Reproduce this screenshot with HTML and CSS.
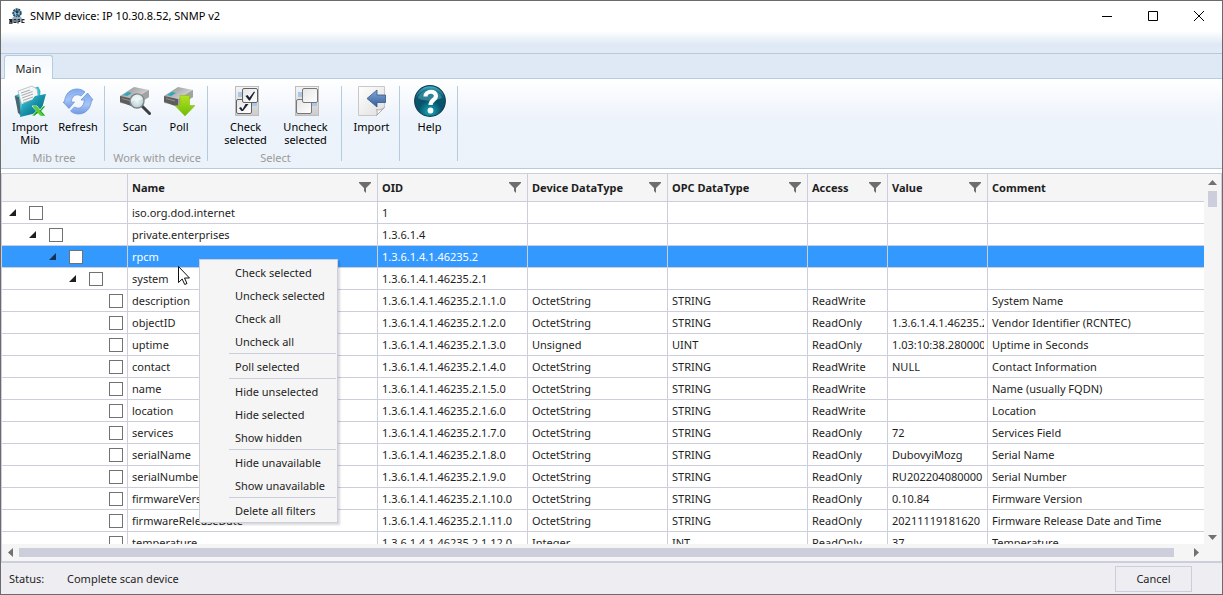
FILE: index.html
```html
<!DOCTYPE html>
<html lang="en">
<head>
<meta charset="utf-8">
<title>SNMP device: IP 10.30.8.52, SNMP v2</title>
<link rel="stylesheet" href="styles.css">
</head>
<body>
<div class="window">
  <header class="titlebar">
    <svg class="app-icon" viewBox="0 0 16 16" aria-hidden="true">
      <circle cx="8" cy="5" r="3.7" fill="#9fc3da" stroke="#234c68" stroke-width="2" stroke-dasharray="2 .6"/>
      <path d="M6 3.5 8 2l2 2-2 2zM7 6l3 .5L8 8z" fill="#17384f"/>
      <path d="M4 9h8l1 2H3z" fill="#8fb0c4"/>
      <path d="M0 11.500h3v1.200H1v1h2v1.500H0M5 11.500H7v3H5zM9 15.500V11.500h1.800v2H9M15.500 11.700H13v2.800h2.500" fill="none" stroke="#1d2730" stroke-width="1.200"/>
    </svg>
    <h1 class="title">SNMP device: IP 10.30.8.52, SNMP v2</h1>
    <div class="caption-buttons">
      <button type="button" aria-label="Minimize"><svg viewBox="0 0 10 10"><path d="M0 5.500h10"/></svg></button>
      <button type="button" aria-label="Maximize"><svg viewBox="0 0 10 10"><path d="M.5.5h9v9h-9z"/></svg></button>
      <button type="button" aria-label="Close"><svg viewBox="0 0 10 10"><path d="M0 0l10 10M10 0 0 10"/></svg></button>
    </div>
  </header>
  <div class="quickbar"></div>
  <nav class="tabs" role="tablist">
    <button type="button" class="tab" role="tab" aria-selected="true">Main</button>
  </nav>
  <div class="ribbon">
    <section class="group group-wide">
      <div class="tools">
        <button type="button" class="tool tool-medium">
          <svg viewBox="0 0 32 32" aria-hidden="true">
            <defs><linearGradient id="folder" x1="0" y1="0" x2="1" y2="1"><stop offset="0" stop-color="#57d0dc"/><stop offset=".5" stop-color="#1691a9"/><stop offset="1" stop-color="#0a5873"/></linearGradient></defs>
            <path d="M1 11l5-2 18-7 2 4-1 16-19 8z" fill="#2ecbd5" stroke="#1a8ca0" stroke-width=".6"/>
            <path d="M1 11l4 1 2 18-3-2z" fill="#4c6471"/>
            <path d="M4 6 18 1l5 3 2 14-16 7z" fill="#f5f6f6" stroke="#a8b1b5" stroke-width=".7"/>
            <path d="M7 8l9-3M7.500 10.500l11-4M8 13l11-4M9 15.500l10-3.500M9 18l9-3" stroke="#9ba3a8" stroke-width=".9"/>
            <path d="M8 19l10-4 3-4 11-2-5 18-21 5z" fill="url(#folder)"/>
            <path d="M18 21h5l3 4 3-4h3l-4.500 5 4.500 5h-5l-2.500-3-4 3h-3l5-5z" fill="#16a51c" stroke="#f2fff1" stroke-width=".8"/>
            <path d="M19 21.500h3.500l7 9H26z" fill="#58cd3b"/>
          </svg>
          <span>Import Mib</span>
        </button>
        <button type="button" class="tool tool-medium">
          <svg viewBox="0 0 32 32" aria-hidden="true">
            <defs><linearGradient id="arrows" x1="0" y1="0" x2="0" y2="1"><stop offset="0" stop-color="#7fa9ec"/><stop offset=".55" stop-color="#a8c4f5"/><stop offset="1" stop-color="#6f9ae2"/></linearGradient></defs>
            <g fill="url(#arrows)" stroke="#6c96dc" stroke-width=".8">
              <path d="M2.500 17C3 9 8 4 15 4c3 0 6 1 8 3l-4 4c-5-3-9 0-10 6h3.500L7 23.500 1 17z"/>
              <path d="M29.500 15C29 23 24 29 16.500 29c-3 0-6-1-8-3l4-4c5 3 9 0 10-7H19l6.500-7 5.500 7z"/>
            </g>
          </svg>
          <span>Refresh</span>
        </button>
      </div>
      <h2 class="caption">Mib tree</h2>
    </section>
    <section class="group group-wide">
      <div class="tools">
        <button type="button" class="tool tool-small">
          <svg viewBox="0 0 32 32" aria-hidden="true">
            <defs>
              <linearGradient id="box" x1="0" y1="0" x2="1" y2="1"><stop offset="0" stop-color="#8a8a8a"/><stop offset=".6" stop-color="#d0d0d0"/><stop offset="1" stop-color="#9b9b9b"/></linearGradient>
              <radialGradient id="lens"><stop offset="0" stop-color="#eef6f7"/><stop offset="1" stop-color="#b5cfd6"/></radialGradient>
            </defs>
            <path d="M1 11 15 2l15 3v7L16 21 1 18z" fill="url(#box)"/>
            <path d="M1 11l14 3v8L1 17z" fill="#5d5d5f"/>
            <path d="M15 14 30 5v7l-15 9z" fill="#a2a2a2"/>
            <path d="M4 10l5-3 4 1-5 3z" fill="#27a8bd"/>
            <path d="M3 13.500l9 2.500" stroke="#929292"/>
            <path d="M23 21l7.500 7.500" stroke="#3e3e40" stroke-width="3" stroke-linecap="round"/>
            <circle cx="18" cy="16" r="7" fill="url(#lens)" stroke="#7b8488" stroke-width="1.400"/>
            <path d="M12 17c4-3 8-1 12-3-1-7-12-6-12 3z" fill="#fff" opacity=".6"/>
          </svg>
          <span>Scan</span>
        </button>
        <button type="button" class="tool tool-small">
          <svg viewBox="0 0 32 32" aria-hidden="true">
            <defs><linearGradient id="green" x1="0" y1="0" x2="0" y2="1"><stop offset="0" stop-color="#b4e21f"/><stop offset="1" stop-color="#6ebd08"/></linearGradient></defs>
            <path d="M1 11 15 2l15 3v7L16 21 1 18z" fill="url(#box)"/>
            <path d="M1 11l14 3v8L1 17z" fill="#5d5d5f"/>
            <path d="M15 14 30 5v7l-15 9z" fill="#a2a2a2"/>
            <path d="M4 10l5-3 4 1-5 3z" fill="#27a8bd"/>
            <path d="M3 13.500l9 2.500" stroke="#929292"/>
            <path d="M17 10.500h9.500v10h5.500L22 31 12 20.500h5z" fill="url(#green)" stroke="#86bd18" stroke-width=".6"/>
          </svg>
          <span>Poll</span>
        </button>
      </div>
      <h2 class="caption">Work with device</h2>
    </section>
    <section class="group group-select">
      <div class="tools">
        <button type="button" class="tool tool-large">
          <svg viewBox="0 0 32 32" aria-hidden="true">
            <defs>
              <linearGradient id="sheet" x1="0" y1="0" x2="0" y2="1"><stop offset="0" stop-color="#f4f4f4"/><stop offset="1" stop-color="#cccccc"/></linearGradient>
              <linearGradient id="tile" x1="0" y1="0" x2="1" y2="1"><stop offset="0" stop-color="#e5e5e5"/><stop offset="1" stop-color="#fff"/></linearGradient>
            </defs>
            <rect x="5.500" y="1.500" width="23" height="29" fill="url(#sheet)" stroke="#bdbdbd"/>
            <path d="M8 7h5v5H8zM22 18h5v3h-5z" fill="#a9c9e7"/>
            <rect x="6.500" y="14.500" width="15" height="14" rx="1.500" fill="url(#tile)" stroke="#626262"/>
            <rect x="12.500" y="3.500" width="15" height="14" rx="1.500" fill="url(#tile)" stroke="#626262"/>
            <path d="M15.500 11l2-1 2 2.500 4.500-6 1 .5-5 8.500-1 0zM9 23l2-1 1.500 2.500 3-5.500h3l-5.500 7-1.500 0z" fill="#182033"/>
          </svg>
          <span>Check selected</span>
        </button>
        <button type="button" class="tool tool-large">
          <svg viewBox="0 0 32 32" aria-hidden="true">
            <rect x="5.500" y="1.500" width="23" height="29" fill="url(#sheet)" stroke="#bdbdbd"/>
            <path d="M8 7h5v5H8zM22 18h5v3h-5z" fill="#a9c9e7"/>
            <rect x="6.500" y="14.500" width="15" height="14" rx="1.500" fill="url(#tile)" stroke="#777"/>
            <rect x="12.500" y="3.500" width="15" height="14" rx="1.500" fill="url(#tile)" stroke="#777"/>
          </svg>
          <span>Uncheck selected</span>
        </button>
      </div>
      <h2 class="caption">Select</h2>
    </section>
    <section class="group group-single">
      <div class="tools">
        <button type="button" class="tool tool-medium">
          <svg viewBox="0 0 32 32" aria-hidden="true">
            <defs>
              <linearGradient id="page" x1="0" y1="0" x2="1" y2="1"><stop offset="0" stop-color="#fff"/><stop offset="1" stop-color="#dedede"/></linearGradient>
              <linearGradient id="blue" x1="0" y1="0" x2="0" y2="1"><stop offset="0" stop-color="#83a9d7"/><stop offset="1" stop-color="#335d9b"/></linearGradient>
            </defs>
            <path d="M2.500 1.500h26v21l-8 8h-18z" fill="url(#page)" stroke="#c8c8c8"/>
            <path d="M20.500 30.500c1-2 1-4 0-6 3 1 5 0 8-2z" fill="#fbfbfb" stroke="#aaa"/>
            <path d="M11 13.500 21 5v5h8.500v7.500H21v4.500z" fill="url(#blue)" stroke="#34578a" stroke-width=".8"/>
          </svg>
          <span>Import</span>
        </button>
      </div>
    </section>
    <section class="group group-single">
      <div class="tools">
        <button type="button" class="tool tool-medium">
          <svg viewBox="0 0 32 32" aria-hidden="true">
            <defs><radialGradient id="ball" cx=".5" cy=".85" r=".85"><stop offset="0" stop-color="#19abc0"/><stop offset=".45" stop-color="#075369"/><stop offset=".75" stop-color="#0c5670"/><stop offset="1" stop-color="#48c3d3"/></radialGradient></defs>
            <circle cx="16" cy="16" r="15.300" fill="url(#ball)" stroke="#103e55" stroke-width="1.200"/>
            <path d="M4 13C6 3 26 3 28 13c-6 3-18 4-24 0z" fill="#7edbe3" opacity=".35"/>
            <path d="M11.500 11.500c0-6 10.500-6.500 10.500-.5 0 4-5.500 4-5.500 9" fill="none" stroke="#fff" stroke-width="4.200"/>
            <circle cx="16.500" cy="25.500" r="2.900" fill="#fff"/>
          </svg>
          <span>Help</span>
        </button>
      </div>
    </section>
  </div>

  <main class="datagrid">
    <div class="viewport">
      <table>
        <colgroup><col class="c-tree"><col class="c-name"><col class="c-oid"><col class="c-type"><col class="c-type"><col class="c-access"><col class="c-value"><col></colgroup>
        <thead>
          <tr>
            <th></th>
            <th><div class="head">Name<button type="button" class="filter" aria-label="Filter Name"></button></div></th>
            <th><div class="head">OID<button type="button" class="filter" aria-label="Filter OID"></button></div></th>
            <th><div class="head">Device DataType<button type="button" class="filter" aria-label="Filter Device DataType"></button></div></th>
            <th><div class="head">OPC DataType<button type="button" class="filter" aria-label="Filter OPC DataType"></button></div></th>
            <th><div class="head">Access<button type="button" class="filter" aria-label="Filter Access"></button></div></th>
            <th><div class="head">Value<button type="button" class="filter" aria-label="Filter Value"></button></div></th>
            <th><div class="head">Comment</div></th>
          </tr>
        </thead>
        <tbody>
          <tr><td><div class="node level-0"><i class="expander"></i><input type="checkbox" aria-label="iso.org.dod.internet"></div></td><td>iso.org.dod.internet</td><td>1</td><td></td><td></td><td></td><td></td><td></td></tr>
          <tr><td><div class="node level-1"><i class="expander"></i><input type="checkbox" aria-label="private.enterprises"></div></td><td>private.enterprises</td><td>1.3.6.1.4</td><td></td><td></td><td></td><td></td><td></td></tr>
          <tr class="selected"><td><div class="node level-2"><i class="expander"></i><input type="checkbox" aria-label="rpcm"></div></td><td>rpcm</td><td>1.3.6.1.4.1.46235.2</td><td></td><td></td><td></td><td></td><td></td></tr>
          <tr><td><div class="node level-3"><i class="expander"></i><input type="checkbox" aria-label="system"></div></td><td>system</td><td>1.3.6.1.4.1.46235.2.1</td><td></td><td></td><td></td><td></td><td></td></tr>
          <tr><td><div class="node level-4"><input type="checkbox" aria-label="description"></div></td><td>description</td><td>1.3.6.1.4.1.46235.2.1.1.0</td><td>OctetString</td><td>STRING</td><td>ReadWrite</td><td></td><td>System Name</td></tr>
          <tr><td><div class="node level-4"><input type="checkbox" aria-label="objectID"></div></td><td>objectID</td><td>1.3.6.1.4.1.46235.2.1.2.0</td><td>OctetString</td><td>STRING</td><td>ReadOnly</td><td><div class="clip">1.3.6.1.4.1.46235.2</div></td><td>Vendor Identifier (RCNTEC)</td></tr>
          <tr><td><div class="node level-4"><input type="checkbox" aria-label="uptime"></div></td><td>uptime</td><td>1.3.6.1.4.1.46235.2.1.3.0</td><td>Unsigned</td><td>UINT</td><td>ReadOnly</td><td><div class="clip">1.03:10:38.280000</div></td><td>Uptime in Seconds</td></tr>
          <tr><td><div class="node level-4"><input type="checkbox" aria-label="contact"></div></td><td>contact</td><td>1.3.6.1.4.1.46235.2.1.4.0</td><td>OctetString</td><td>STRING</td><td>ReadWrite</td><td>NULL</td><td>Contact Information</td></tr>
          <tr><td><div class="node level-4"><input type="checkbox" aria-label="name"></div></td><td>name</td><td>1.3.6.1.4.1.46235.2.1.5.0</td><td>OctetString</td><td>STRING</td><td>ReadWrite</td><td></td><td>Name (usually FQDN)</td></tr>
          <tr><td><div class="node level-4"><input type="checkbox" aria-label="location"></div></td><td>location</td><td>1.3.6.1.4.1.46235.2.1.6.0</td><td>OctetString</td><td>STRING</td><td>ReadWrite</td><td></td><td>Location</td></tr>
          <tr><td><div class="node level-4"><input type="checkbox" aria-label="services"></div></td><td>services</td><td>1.3.6.1.4.1.46235.2.1.7.0</td><td>OctetString</td><td>STRING</td><td>ReadOnly</td><td>72</td><td>Services Field</td></tr>
          <tr><td><div class="node level-4"><input type="checkbox" aria-label="serialName"></div></td><td>serialName</td><td>1.3.6.1.4.1.46235.2.1.8.0</td><td>OctetString</td><td>STRING</td><td>ReadOnly</td><td>DubovyiMozg</td><td>Serial Name</td></tr>
          <tr><td><div class="node level-4"><input type="checkbox" aria-label="serialNumber"></div></td><td>serialNumber</td><td>1.3.6.1.4.1.46235.2.1.9.0</td><td>OctetString</td><td>STRING</td><td>ReadOnly</td><td><div class="clip">RU202204080000</div></td><td>Serial Number</td></tr>
          <tr><td><div class="node level-4"><input type="checkbox" aria-label="firmwareVersion"></div></td><td>firmwareVersion</td><td>1.3.6.1.4.1.46235.2.1.10.0</td><td>OctetString</td><td>STRING</td><td>ReadOnly</td><td>0.10.84</td><td>Firmware Version</td></tr>
          <tr><td><div class="node level-4"><input type="checkbox" aria-label="firmwareReleaseDate"></div></td><td>firmwareReleaseDate</td><td>1.3.6.1.4.1.46235.2.1.11.0</td><td>OctetString</td><td>STRING</td><td>ReadOnly</td><td>20211119181620</td><td>Firmware Release Date and Time</td></tr>
          <tr><td><div class="node level-4"><input type="checkbox" aria-label="temperature"></div></td><td>temperature</td><td>1.3.6.1.4.1.46235.2.1.12.0</td><td>Integer</td><td>INT</td><td>ReadOnly</td><td>37</td><td>Temperature</td></tr>
        </tbody>
      </table>
    </div>
    <div class="vscroll"><i class="arrow up"></i><i class="thumb"></i><i class="arrow down"></i></div>
    <div class="hscroll"><i class="arrow left"></i><i class="thumb"></i><i class="arrow right"></i></div>
  </main>

  <footer class="statusbar">
    <span class="status-label">Status:</span>
    <span>Complete scan device</span>
    <button type="button" class="cancel">Cancel</button>
  </footer>

  <div class="menu" role="menu">
    <button type="button" role="menuitem">Check selected</button>
    <button type="button" role="menuitem">Uncheck selected</button>
    <button type="button" role="menuitem">Check all</button>
    <button type="button" role="menuitem">Uncheck all</button>
    <hr>
    <button type="button" role="menuitem">Poll selected</button>
    <hr>
    <button type="button" role="menuitem">Hide unselected</button>
    <button type="button" role="menuitem">Hide selected</button>
    <button type="button" role="menuitem">Show hidden</button>
    <hr>
    <button type="button" role="menuitem">Hide unavailable</button>
    <button type="button" role="menuitem">Show unavailable</button>
    <hr>
    <button type="button" role="menuitem">Delete all filters</button>
  </div>
  <svg class="cursor" viewBox="0 0 12 19" aria-hidden="true"><path d="M.5.5v16l3.700-3.500 2.500 5.500 2.300-1-2.500-5.500h5z" fill="#fff" stroke="#111"/></svg>
</div>
</body>
</html>
```

FILE: styles.css
```css
* { box-sizing: border-box; }

body {
  margin: 0;
  font: 11px/16px "Noto Sans", "Open Sans", sans-serif;
  color: #1e1e1e;
}

button {
  padding: 0;
  border: 0;
  background: none;
  font: inherit;
  color: inherit;
}

.window {
  position: relative;
  display: flex;
  flex-direction: column;
  height: 100vh;
  overflow: hidden;
  border: 1px solid #6b6b6b;
  background: #fff;
}

/* Title bar */
.titlebar {
  display: flex;
  flex: none;
  align-items: center;
  height: 30px;
  padding-left: 8px;
  color: #000;
}
.app-icon { width: 16px; height: 16px; margin-right: 5px; }
.title { flex: 1; margin: 0; font-size: 11px; font-weight: 400; }
.caption-buttons { display: flex; }
.caption-buttons button {
  display: grid;
  place-items: center;
  width: 46px;
  height: 30px;
}
.caption-buttons svg {
  width: 10px;
  height: 10px;
  fill: none;
  stroke: #000;
  overflow: visible;
}

.quickbar {
  flex: none;
  height: 23px;
  border-bottom: 1px solid #b9c9da;
  background: linear-gradient(#fff, #dfe9f5 60%, #e2eaf6);
}

/* Ribbon */
.tabs {
  display: flex;
  flex: none;
  height: 25px;
  padding: 1px 3px 0;
  border-bottom: 1px solid #b5cbe0;
  background: #dfe9f5;
}
.tab {
  width: 49px;
  height: 24px;
  padding-top: 3px;
  border: 1px solid #b5cbe0;
  border-bottom: 0;
  border-radius: 3px 3px 0 0;
  background: linear-gradient(#f3f8fd, #fff);
  white-space: nowrap;
}
.ribbon {
  display: flex;
  flex: none;
  height: 90px;
  padding: 7px 1px;
  border-bottom: 1px solid #b5cbe0;
  background: linear-gradient(#fff, #edf3fb 45%, #ecf2fa);
}
.group {
  display: flex;
  flex-direction: column;
  justify-content: space-between;
  height: 75px;
  padding-left: 2px;
  border-right: 1px solid #b5cbe0;
}
.group-wide { width: 103px; }
.group-select { width: 134px; }
.group-single { width: 58px; }
.tools { display: flex; justify-content: center; }
.tool {
  display: flex;
  flex-direction: column;
  align-items: center;
  gap: 3px;
  line-height: 13px;
  color: #000;
}
.tool svg { width: 32px; height: 32px; margin-top: -1px; }
.tool-small { width: 44px; }
.tool-medium { width: 48px; }
.tool-large { width: 60px; }
.caption {
  margin: 0;
  font-size: 11px;
  font-weight: 400;
  line-height: 6px;
  text-align: center;
  color: #9a9a9a;
  white-space: nowrap;
}

/* Grid */
.datagrid {
  display: grid;
  flex: 1;
  grid-template: minmax(0, 1fr) 17px / minmax(0, 1fr) 17px;
  min-height: 0;
  margin-top: 4px;
  border: 1px solid #cccedb;
  border-bottom-width: 2px;
  background: #f5f5f5;
}
.viewport { overflow: hidden; background: #fff; }
table {
  width: 100%;
  table-layout: fixed;
  border-collapse: separate;
  border-spacing: 0;
}
.c-tree { width: 126px; }
.c-name { width: 250px; }
.c-oid { width: 150px; }
.c-type { width: 140px; }
.c-access { width: 80px; }
.c-value { width: 100px; }
th, td {
  padding: 0 3px 0 4px;
  border-right: 1px solid #cccedb;
  border-bottom: 1px solid #cccedb;
  text-align: left;
  white-space: nowrap;
}
th:last-child, td:last-child { border-right: 0; }
th { height: 28px; background: #f5f5f5; font-weight: 700; }
td { height: 22px; line-height: 20px; }
td + td { padding-top: 1px; }
.clip { overflow: hidden; }
.head {
  display: flex;
  align-items: center;
  justify-content: space-between;
  padding-right: 3px;
}
.filter {
  width: 12px;
  height: 11px;
  background: #6d6d6d;
  clip-path: polygon(0 0, 100% 0, 100% 1px, 7px 6px, 7px 11px, 5px 9px, 5px 6px, 0 1px);
}
.selected td { background: #3399ff; color: #fff; }

.node { display: flex; align-items: center; gap: 13px; }
.level-0 { padding-left: 3px; }
.level-1 { padding-left: 23px; }
.level-2 { padding-left: 43px; }
.level-3 { padding-left: 63px; }
.level-4 { padding-left: 103px; }
.expander {
  width: 7px;
  height: 7px;
  background: #1e1e1e;
  clip-path: polygon(100% 0, 100% 100%, 0 100%);
}
.selected .expander { background: #17324d; }
.node input {
  appearance: none;
  width: 14px;
  height: 14px;
  margin: 0;
  border: 1px solid #717171;
  background: #fff;
}

/* Scroll bars */
.vscroll, .hscroll { display: flex; align-items: center; }
.vscroll { flex-direction: column; padding: 6px 0 4px; }
.vscroll .thumb { width: 9px; height: 16px; margin: 6px 0 auto; background: #cccedb; }
.hscroll { padding: 0 5px 0 6px; }
.hscroll .thumb { flex: 1; height: 9px; margin: 0 20px 0 6px; background: #cccedb; }
.arrow { flex: none; background: #717171; }
.up, .down { width: 9px; height: 5px; }
.left, .right { width: 5px; height: 9px; }
.up { clip-path: polygon(50% 0, 100% 100%, 0 100%); }
.down { clip-path: polygon(0 0, 100% 0, 50% 100%); }
.left { clip-path: polygon(0 50%, 100% 0, 100% 100%); }
.right { clip-path: polygon(0 0, 100% 50%, 0 100%); }

/* Status bar */
.statusbar {
  display: flex;
  flex: none;
  align-items: center;
  height: 31px;
  padding: 0 30px 0 8px;
  background: #eeeef2;
}
.status-label { width: 58px; }
.cancel {
  width: 77px;
  height: 26px;
  margin-left: auto;
  border: 1px solid #cccedb;
}

/* Context menu */
.menu {
  position: absolute;
  top: 258px;
  left: 198px;
  display: flex;
  flex-direction: column;
  width: 139px;
  padding: 1px 1px 0;
  border: 1px solid #cccedb;
  background: #f5f5f5;
  box-shadow: 2px 2px 2px rgba(0, 0, 0, .15);
}
.menu button {
  height: 23px;
  padding-left: 34px;
  text-align: left;
  white-space: nowrap;
}
.menu hr {
  width: 107px;
  height: 1px;
  margin: 0 0 1px auto;
  border: 0;
  background: #cccedb;
}
.cursor {
  position: absolute;
  top: 265px;
  left: 177px;
  width: 12px;
  height: 19px;
}
```
